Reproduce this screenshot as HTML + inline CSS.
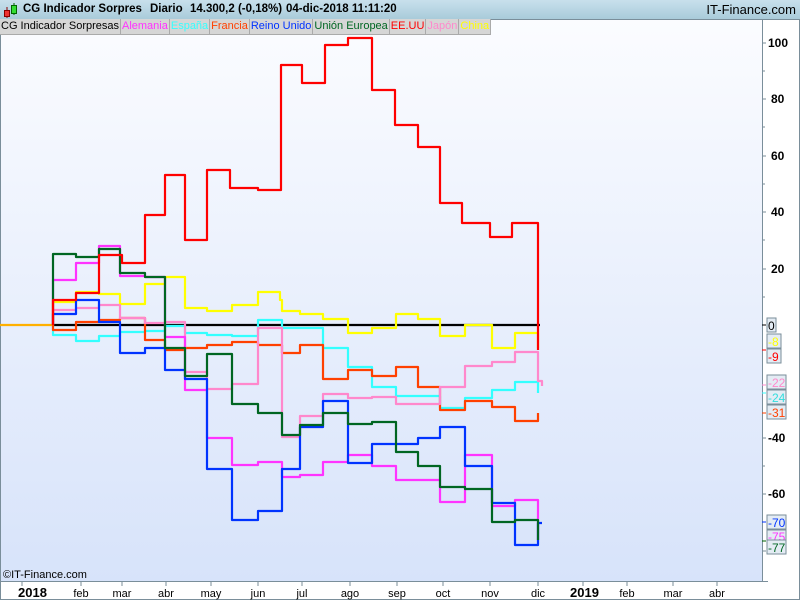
<!DOCTYPE html>
<html><head><meta charset="utf-8"><style>
body{margin:0;width:800px;height:600px;overflow:hidden;background:#fff;font-family:"Liberation Sans",sans-serif}
#t{position:absolute;left:0;top:0;width:800px;height:19px;background:linear-gradient(#c8e0ec,#a9cbda);border-bottom:1px solid #7a8e9a}
#t span{position:absolute;top:3px;font-size:11.5px;font-weight:bold;color:#000;white-space:nowrap}
#lg{position:absolute;left:0;top:19px;height:16px;display:flex;font-size:11px}
#lg div{background:#d6d6d6;border-right:1px solid #aaa;border-bottom:1px solid #aaa;padding:0 1px;line-height:15px}
</style></head><body>
<svg width="800" height="600" style="position:absolute;left:0;top:0">
<defs><linearGradient id="g" x1="0" y1="0" x2="0" y2="1"><stop offset="0" stop-color="#fbfcff"/><stop offset="1" stop-color="#d7e3fa"/></linearGradient></defs>
<rect x="0" y="20" width="762" height="561" fill="url(#g)"/>
<line x1="762.5" y1="20" x2="762.5" y2="582" stroke="#7a8e9a"/>
<line x1="0" y1="581.5" x2="768" y2="581.5" stroke="#7a8e9a"/>
<line x1="799.5" y1="20" x2="799.5" y2="600" stroke="#7a8e9a"/>
<line x1="0" y1="599.5" x2="800" y2="599.5" stroke="#7a8e9a"/>
<line x1="0.5" y1="20" x2="0.5" y2="600" stroke="#7a8e9a"/>
<g stroke="#7a8e9a">
<line x1="762" y1="43" x2="766" y2="43"/><line x1="762" y1="71" x2="765" y2="71"/><line x1="762" y1="99" x2="766" y2="99"/><line x1="762" y1="127" x2="765" y2="127"/><line x1="762" y1="156" x2="766" y2="156"/><line x1="762" y1="184" x2="765" y2="184"/><line x1="762" y1="212" x2="766" y2="212"/><line x1="762" y1="240" x2="765" y2="240"/><line x1="762" y1="269" x2="766" y2="269"/><line x1="762" y1="297" x2="765" y2="297"/><line x1="762" y1="438" x2="766" y2="438"/><line x1="762" y1="466" x2="765" y2="466"/><line x1="762" y1="494" x2="766" y2="494"/><line x1="762" y1="551" x2="766" y2="551"/>
<g transform="translate(0,582)"><line x1="22" y1="0" x2="22" y2="4"/><line x1="81" y1="0" x2="81" y2="4"/><line x1="122" y1="0" x2="122" y2="4"/><line x1="166" y1="0" x2="166" y2="4"/><line x1="211" y1="0" x2="211" y2="4"/><line x1="258" y1="0" x2="258" y2="4"/><line x1="302" y1="0" x2="302" y2="4"/><line x1="350" y1="0" x2="350" y2="4"/><line x1="397" y1="0" x2="397" y2="4"/><line x1="443" y1="0" x2="443" y2="4"/><line x1="490" y1="0" x2="490" y2="4"/><line x1="538" y1="0" x2="538" y2="4"/><line x1="583" y1="0" x2="583" y2="4"/><line x1="627" y1="0" x2="627" y2="4"/><line x1="673" y1="0" x2="673" y2="4"/><line x1="717" y1="0" x2="717" y2="4"/></g>
</g>
<g fill="none" stroke-width="2.2" stroke-linejoin="round">
<path stroke="#ffb000" d="M0 325H53"/>
<path stroke="#000" d="M53 325H540"/>
<path stroke="#33ffff" d="M53 325V335H76V341H99V336H120V332H145V331H165V326H185V333H207V335H232V336H258V320H282V328H323V348H348V367H372V387H396V396H440V408H465V398H492V390H515V382H538V393"/>
<path stroke="#ff4000" d="M53 325V330H76V322H99V320H120V318H145V340H165V350H185V348H207V345H232V342H258V345H282V353H300V345H323V379H348V370H372V376H396V367H418V387H440V410H465V401H492V407H515V421H538V413"/>
<path stroke="#ffff00" d="M53 325V302H76V292H99V294H120V304H145V284H165V277H185V308H207V311H232V305H258V292H280V300H282V311H300V314H323V319H348V333H372V328H396V314H418V319H440V336H465V325H492V348H515V333H538V348"/>
<path stroke="#ff88cc" d="M53 325V310H76V308H99V305H120V318H145V323H165V322H185V372H207V389H232V384H258V328H282V437H300V416H323V394H348V398H372V397H396V404H440V387H465V366H492V362H515V352H538V381H542V386"/>
<path stroke="#ff33ff" d="M53 325V280H76V263H99V246H120V276H145V277H165V337H185V390H207V438H232V465H258V462H282V477H300V475H323V462H348V455H372V466H396V480H440V502H465V455H492V506H515V500H538V540"/>
<path stroke="#0033ff" d="M53 325V314H76V300H99V322H120V353H145V348H165V370H185V379H207V469H232V520H258V511H282V469H300V427H323V401H348V463H372V444H418V438H440V427H465V466H492V503H515V545H538V523H542"/>
<path stroke="#006622" d="M53 325V254H76V257H99V249H120V273H145V277H165V348H185V376H207V354H232V404H258V413H282V435H300V425H323V413H348V424H372V422H396V452H418V466H440V487H465V489H492V522H515V520H538V540"/>
<path stroke="#ff0000" d="M53 325V300H76V293H99V255H122V263H145V215H165V175H185V240H207V170H230V188H258V190H281V65H302V83H325V45H348V38H372V90H395V125H418V147H440V203H462V223H490V237H512V223H538V350"/>
</g>
<g font-size="12" font-weight="bold" font-family="Liberation Sans,sans-serif">
<text x="768" y="47">100</text><text x="771" y="103">80</text><text x="771" y="160">60</text><text x="771" y="216">40</text><text x="771" y="273">20</text><text x="768" y="442">-40</text><text x="768" y="498">-60</text>
<text x="18" y="597" font-size="13">2018</text><text x="570" y="597" font-size="13">2019</text>
</g>
<g font-size="11" font-family="Liberation Sans,sans-serif" text-anchor="middle">
<text x="81" y="597">feb</text><text x="122" y="597">mar</text><text x="166" y="597">abr</text><text x="211" y="597">may</text><text x="258" y="597">jun</text><text x="302" y="597">jul</text><text x="350" y="597">ago</text><text x="397" y="597">sep</text><text x="443" y="597">oct</text><text x="490" y="597">nov</text><text x="538" y="597">dic</text><text x="627" y="597">feb</text><text x="673" y="597">mar</text><text x="717" y="597">abr</text>
</g>
<text x="3" y="578" font-size="11" font-family="Liberation Sans,sans-serif">©IT-Finance.com</text>
<g font-size="12" font-family="Liberation Sans,sans-serif" stroke-width="1">
<rect x="767" y="318" width="9" height="14" fill="#e4ecf4" stroke="#7a8e9a"/><text x="768" y="330">0</text>
<rect x="767" y="334" width="14" height="14" fill="#e4ecf4" stroke="#7a8e9a"/><text x="768" y="346" fill="#ffff00">-8</text>
<rect x="767" y="349" width="14" height="14" fill="#e4ecf4" stroke="#7a8e9a"/><text x="768" y="361" fill="#ff0000">-9</text>
<rect x="767" y="375" width="19" height="14" fill="#e4ecf4" stroke="#7a8e9a"/><text x="768" y="387" fill="#ff88cc">-22</text>
<rect x="767" y="390" width="19" height="14" fill="#e4ecf4" stroke="#7a8e9a"/><text x="768" y="402" fill="#33dddd">-24</text>
<rect x="767" y="405" width="19" height="14" fill="#e4ecf4" stroke="#7a8e9a"/><text x="768" y="417" fill="#ff4000">-31</text>
<rect x="767" y="515" width="19" height="14" fill="#e4ecf4" stroke="#7a8e9a"/><text x="768" y="527" fill="#0033ff">-70</text>
<rect x="767" y="530" width="19" height="12" fill="#e4ecf4" stroke="#7a8e9a"/><text x="768" y="541" fill="#ff33ff">-75</text>
<rect x="767" y="540" width="19" height="14" fill="#e4ecf4" stroke="#7a8e9a"/><text x="768" y="552" fill="#006622">-77</text>
</g>
<g stroke-width="1"><line x1="762" y1="325" x2="766" y2="325" stroke="#000"/><line x1="762" y1="350" x2="766" y2="350" stroke="#f00"/><line x1="762" y1="385" x2="766" y2="385" stroke="#ff88cc"/><line x1="762" y1="393" x2="766" y2="393" stroke="#3ff"/><line x1="762" y1="413" x2="766" y2="413" stroke="#ff4000"/><line x1="762" y1="522" x2="766" y2="522" stroke="#03f"/><line x1="762" y1="541" x2="766" y2="541" stroke="#060"/></g>
</svg>
<div id="t">
<svg width="18" height="18" style="position:absolute;left:2px;top:1px"><line x1="5" y1="6" x2="5" y2="17" stroke="#800"/><rect x="2.5" y="9.5" width="5" height="6" fill="#e33" stroke="#800"/><line x1="12" y1="2" x2="12" y2="14" stroke="#060"/><rect x="9.5" y="4.5" width="5" height="8" fill="#3d3" stroke="#060"/></svg>
<span style="left:23px">CG Indicador Sorpres</span>
<span style="left:150px">Diario</span>
<span style="left:190px">14.300,2 (-0,18%)</span>
<span style="left:286px">04-dic-2018 11:11:20</span>
<span style="right:4px;font-weight:normal;font-size:13px;top:2px">IT-Finance.com</span>
</div>
<div id="lg">
<div>CG Indicador Sorpresas</div><div style="color:#f3f">Alemania</div><div style="color:#3ff">España</div><div style="color:#ff4000">Francia</div><div style="color:#03f">Reino Unido</div><div style="color:#006622">Unión Europea</div><div style="color:#f00">EE.UU</div><div style="color:#f8c">Japón</div><div style="color:#ff0">China</div>
</div>
</body></html>
